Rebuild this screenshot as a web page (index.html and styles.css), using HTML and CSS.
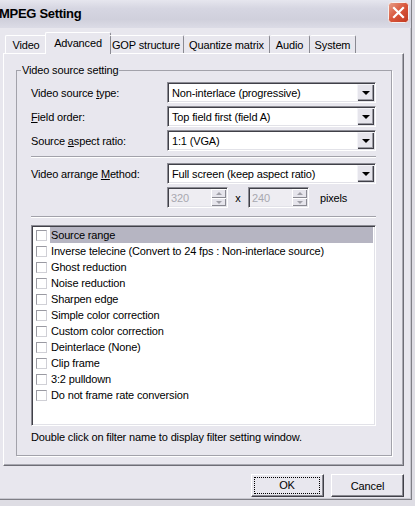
FILE: index.html
```html
<!DOCTYPE html>
<html>
<head>
<meta charset="utf-8">
<link rel="stylesheet" href="styles.css">
</head>
<body>
<div class="window">
  <div class="titlebar">
    <span class="title">MPEG Setting</span>
    <span class="close">
      <svg width="21" height="21" viewBox="0 0 21 21">
        <defs>
          <linearGradient id="cg" x1="0" y1="0" x2="1" y2="1">
            <stop offset="0" stop-color="#e8a08a"/>
            <stop offset="0.5" stop-color="#d8553a"/>
            <stop offset="1" stop-color="#c03820"/>
          </linearGradient>
        </defs>
        <rect x="0.5" y="0.5" width="20" height="20" rx="3" fill="url(#cg)" stroke="#f4f0f0"/>
        <path d="M6 6 L15 15 M15 6 L6 15" stroke="#fff" stroke-width="2.2" stroke-linecap="square"/>
      </svg>
    </span>
  </div>
  <div class="client">
    <div class="tabs">
      <div class="tab t-video">Video</div>
      <div class="tab active t-adv">Advanced</div>
      <div class="tab t-gop">GOP structure</div>
      <div class="tab t-quant">Quantize matrix</div>
      <div class="tab t-audio">Audio</div>
      <div class="tab t-sys">System</div>
    </div>
    <div class="panel">
      <fieldset class="group">
        <legend>Video source setting</legend>
        <div class="form">
          <label class="lbl">Video source <u>t</u>ype:</label>
          <div class="combo"><span class="val">Non-interlace (progressive)</span><span class="drop"><i></i></span></div>
          <label class="lbl"><u>F</u>ield order:</label>
          <div class="combo"><span class="val">Top field first (field A)</span><span class="drop"><i></i></span></div>
          <label class="lbl">Source <u>a</u>spect ratio:</label>
          <div class="combo"><span class="val">1:1 (VGA)</span><span class="drop"><i></i></span></div>
        </div>
        <div class="sep"></div>
        <div class="form form2">
          <label class="lbl">Video arrange <u>M</u>ethod:</label>
          <div class="combo"><span class="val">Full screen (keep aspect ratio)</span><span class="drop"><i></i></span></div>
        </div>
        <div class="sizerow">
          <div class="spin"><span class="num">320</span><span class="arrows"><span class="up"><i></i></span><span class="dn"><i></i></span></span></div>
          <span class="times">x</span>
          <div class="spin"><span class="num">240</span><span class="arrows"><span class="up"><i></i></span><span class="dn"><i></i></span></span></div>
          <span class="unit">pixels</span>
        </div>
        <div class="sep sep2"></div>
        <div class="listbox">
          <div class="item sel"><span class="cb"></span><span class="txt">Source range</span></div>
          <div class="item"><span class="cb"></span><span class="txt">Inverse telecine (Convert to 24 fps : Non-interlace source)</span></div>
          <div class="item"><span class="cb"></span><span class="txt">Ghost reduction</span></div>
          <div class="item"><span class="cb"></span><span class="txt">Noise reduction</span></div>
          <div class="item"><span class="cb"></span><span class="txt">Sharpen edge</span></div>
          <div class="item"><span class="cb"></span><span class="txt">Simple color correction</span></div>
          <div class="item"><span class="cb"></span><span class="txt">Custom color correction</span></div>
          <div class="item"><span class="cb"></span><span class="txt">Deinterlace (None)</span></div>
          <div class="item"><span class="cb"></span><span class="txt">Clip frame</span></div>
          <div class="item"><span class="cb"></span><span class="txt">3:2 pulldown</span></div>
          <div class="item"><span class="cb"></span><span class="txt">Do not frame rate conversion</span></div>
        </div>
        <p class="hint">Double click on filter name to display filter setting window.</p>
      </fieldset>
    </div>
    <div class="buttons">
      <div class="btn ok"><span class="focus">OK</span></div>
      <div class="btn">Cancel</div>
    </div>
  </div>
</div>
</body>
</html>
```
FILE: styles.css
```css
* { box-sizing: border-box; }
html, body {
  margin: 0;
  padding: 0;
  background: #dedde4;
  width: 415px;
  height: 506px;
  overflow: hidden;
  font-family: "Liberation Sans", Arial, sans-serif;
  font-size: 11px;
  letter-spacing: -0.15px;
  color: #000;
}
.window {
  width: 412px;
  height: 500px;
  background: #e8e7ee;
  border-right: 1px solid #7f7f86;
  border-bottom: 1px solid #7f7f86;
  box-shadow: inset -1px -1px 0 #c8c8d0;
}
.titlebar {
  height: 28px;
  background: linear-gradient(180deg, #e6e6ee 0%, #d6d6e2 30%, #d0d0dc 70%, #dcdce6 100%);
  display: flex;
  align-items: center;
  justify-content: space-between;
  padding-right: 2px;
}
.title {
  font-weight: bold;
  font-size: 13px;
  letter-spacing: -0.3px;
  margin-left: -1px;
  margin-top: -1px;
  color: #000;
}
.close { display: flex; margin-top: -4px; }
.client {
  padding: 4px 7px 0 3px;
}
.tabs {
  display: flex;
  align-items: flex-end;
  height: 21px;
  padding-left: 2px;
  position: relative;
  z-index: 1;
}
.tab {
  height: 18px;
  display: flex;
  align-items: center;
  justify-content: center;
  border-top: 1px solid #fff;
  border-left: 1px solid #fff;
  border-right: 1px solid #8a8a92;
  border-radius: 2px 2px 0 0;
  padding-top: 1px;
}
.tab.active {
  height: 22px;
  margin-bottom: -1px;
  margin-left: -2px;
  margin-right: -2px;
  background: #e8e7ee;
  padding-bottom: 3px;
}
.t-video { width: 42px; }
.t-adv { width: 66px; }
.t-gop { width: 75px; border-left: none; }
.t-quant { width: 86px; border-left: none; }
.t-audio { width: 40px; border-left: none; }
.t-sys { width: 46px; border-left: none; }
.panel {
  width: 401px;
  height: 413px;
  border-top: 1px solid #fff;
  border-left: 1px solid #fff;
  border-right: 1px solid #6e6e76;
  border-bottom: 1px solid #6e6e76;
  box-shadow: inset -1px -1px 0 #a8a8b0;
  padding: 10px 11px 0 12px;
}
.group {
  margin: 0;
  border: 1px solid #a2a2aa;
  box-shadow: 1px 1px 0 #fff;
  padding: 5px 15px 0 14px;
  height: 392px;
}
.group legend {
  padding: 0 1px;
  margin-left: -10px;
  line-height: 13px;
}
.form {
  display: grid;
  grid-template-columns: 136px 209px;
  row-gap: 3px;
  align-items: center;
}
.combo {
  height: 21px;
  background: #fff;
  border: 1px solid;
  border-color: #8c8c94 #fff #fff #8c8c94;
  box-shadow: inset 1px 1px 0 #404048, inset -1px -1px 0 #e2e2e8;
  display: flex;
  align-items: center;
  justify-content: space-between;
  padding: 1px 1px 1px 4px;
}
.drop {
  width: 17px;
  height: 17px;
  background: #e6e5ec;
  border-top: 1px solid #f4f4f8;
  border-left: 1px solid #f4f4f8;
  box-shadow: inset -1px -1px 0 #404048, inset -2px -2px 0 #9a9aa2;
  display: flex;
  align-items: center;
  justify-content: center;
}
.drop i {
  width: 0; height: 0;
  border-left: 4px solid transparent;
  border-right: 4px solid transparent;
  border-top: 4px solid #000;
  margin-left: -1px;
}
.sep {
  height: 2px;
  border-top: 1px solid #a2a2aa;
  border-bottom: 1px solid #fff;
  margin: 5px 0 5px 0;
}
.sep2 { margin: 8px 0 7px 0; }
.sizerow {
  display: flex;
  align-items: center;
  height: 21px;
  margin-top: 3px;
  padding-left: 136px;
}
.spin {
  width: 61px;
  height: 21px;
  background: #eeedf2;
  border: 1px solid;
  border-color: #8c8c94 #fff #fff #8c8c94;
  box-shadow: inset 1px 1px 0 #404048, inset -1px -1px 0 #e2e2e8;
  display: flex;
  align-items: center;
  justify-content: space-between;
  padding: 1px 1px 1px 3px;
}
.num { color: #a8a8b0; }
.arrows { display: flex; flex-direction: column; width: 15px; height: 17px; }
.arrows > span {
  flex: 1;
  background: #e6e5ec;
  border-top: 1px solid #fff;
  border-left: 1px solid #fff;
  box-shadow: inset -1px -1px 0 #8a8a92;
  display: flex;
  align-items: center;
  justify-content: center;
}
.arrows .up i {
  width: 0; height: 0;
  border-left: 3px solid transparent;
  border-right: 3px solid transparent;
  border-bottom: 3px solid #a0a0a8;
}
.arrows .dn i {
  width: 0; height: 0;
  border-left: 3px solid transparent;
  border-right: 3px solid transparent;
  border-top: 3px solid #a0a0a8;
}
.times { width: 20px; text-align: center; }
.unit { margin-left: 11px; }
.listbox {
  width: 345px;
  height: 201px;
  background: #fff;
  border: 1px solid;
  border-color: #8c8c94 #fff #fff #8c8c94;
  box-shadow: inset 1px 1px 0 #404048, inset -1px -1px 0 #e2e2e8;
  padding: 1px 2px 1px 2px;
}
.item {
  height: 16px;
  display: flex;
  align-items: center;
}
.cb {
  width: 11px;
  height: 11px;
  border: 1px solid;
  border-color: #9a9aa2 #d0d0d6 #d0d0d6 #9a9aa2;
  background: #fff;
  margin: 0 3px 0 2px;
  flex: none;
}
.txt {
  height: 16px;
  line-height: 16px;
  padding-left: 1px;
  flex: 1;
  white-space: nowrap;
}
.item.sel .txt { background: #b6b5c2; }
.hint {
  margin: 4px 0 0 0;
  line-height: 14px;
}
.buttons {
  display: flex;
  justify-content: flex-end;
  gap: 7px;
  margin-top: 8px;
}
.btn {
  width: 73px;
  height: 23px;
  background: #e8e7ee;
  border-top: 1px solid #fff;
  border-left: 1px solid #fff;
  border-right: 1px solid #404048;
  border-bottom: 1px solid #404048;
  box-shadow: inset -1px -1px 0 #8a8a92;
  display: flex;
  align-items: center;
  justify-content: center;
}
.btn.ok { padding: 2px; }
.focus {
  width: 100%;
  height: 100%;
  border: 1px dotted #000;
  display: flex;
  align-items: center;
  justify-content: center;
  margin-right: 1px;
  margin-bottom: 1px;
}
```
